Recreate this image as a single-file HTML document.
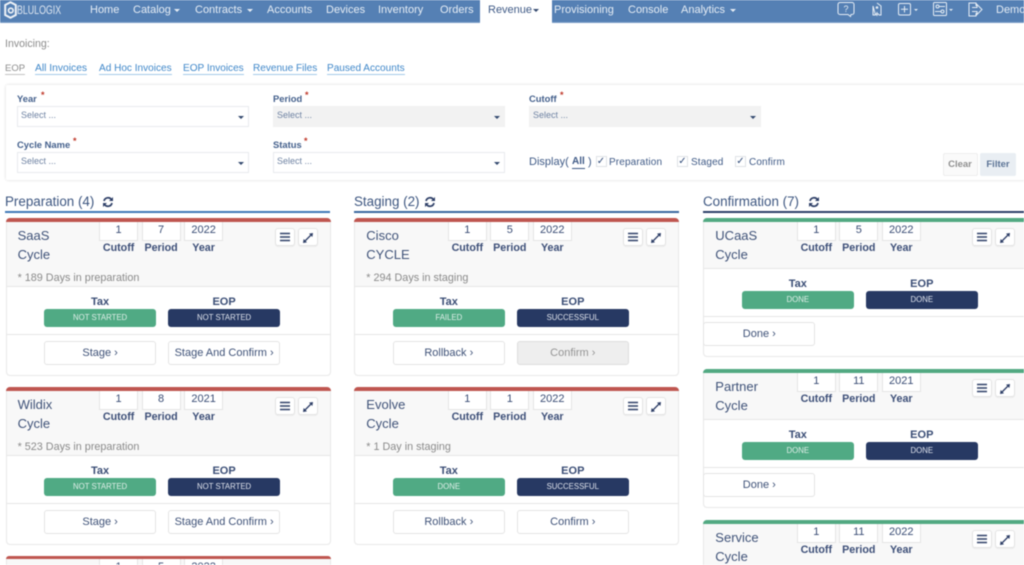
<!DOCTYPE html>
<html><head><meta charset="utf-8"><title>Invoicing</title>
<style>
*{box-sizing:border-box}
html,body{margin:0;padding:0;width:1024px;height:565px;overflow:hidden;background:#fff}
#r{position:absolute;left:0;top:0;width:1024px;height:565px;overflow:hidden;font-family:"Liberation Sans",sans-serif;color:#3a4d75;filter:blur(.4px)}
#r div,#r svg.a{position:absolute;white-space:nowrap}
.nav{left:0;top:0;width:1024px;height:23px;background:#5580b4;border-bottom:1px solid #7ea0c8}
.n{top:3px;height:15px;line-height:15px;font-size:11px;color:#e6edf5}
.c{top:9px;width:0;height:0;border-left:3.500px solid transparent;border-right:3.500px solid transparent;border-top:3.500px solid #e6edf5}
.lnk{top:62px;font-size:10.050px;line-height:13px;height:13px;color:#3f87c9;border-bottom:1px solid #a5cbe9}
.panel{left:6px;top:84.500px;width:1030px;height:95px;background:#fff;box-shadow:0 0 3px rgba(0,0,0,.15);border-radius:2px}
.lb{font-size:9.400px;font-weight:bold;color:#44608c;line-height:12px}
.st{color:#c0392b;font-size:9px;line-height:10px;font-weight:bold}
.sel{width:232px;height:21px;background:#fff;border:1px solid #e8eaee;font-size:9px;line-height:13px;color:#6f83a3;padding:2px 3px}
.sel.d{background:#f2f2f2;border-color:#f0f0f0}
.sel i{position:absolute;right:4px;top:9px;width:0;height:0;border-left:3px solid transparent;border-right:3px solid transparent;border-top:3px solid #33496f}
.cb{top:156px;width:11px;height:11px;border:1px solid #dfe2e6;background:#fff;font-size:10px;line-height:9px;text-align:center;color:#2f4a78}
.cl{top:155.500px;font-size:10px;line-height:13px;color:#3f5a86;letter-spacing:.13px}
.sec{font-size:13.400px;line-height:16px;top:194px;color:#3d5680}
.ul{top:211px;height:2px}
.card{width:325px;background:#fff;border:1px solid #e8e8e8;border-radius:4px}
.bar{left:-1px;top:-1px;right:-1px;height:3.400px;border-radius:4px 4px 0 0}
.red{background:#bf5650}.grn{background:#52a982}
.head{left:0;top:0;right:0;background:#f8f8f8;border-bottom:1px solid #e6e6e6;height:68px}
.s .head{height:50px}
.t{left:11px;top:6.500px;font-size:13px;line-height:19px;color:#3f5278}
.box{top:2.400px;width:39px;height:19px;border:1px solid #e4e4e4;border-top:0;background:#fff;font-size:11px;line-height:17px;text-align:center;color:#3a4d75}
.bl{top:22px;width:39px;font-size:10.700px;font-weight:bold;line-height:14px;text-align:center;color:#3d4f78}
.x1{left:92.500px}.x2{left:135px}.x3{left:177.500px}
.ib{top:8.500px;width:20px;height:18px;border:1px solid #e4e4e4;border-radius:3px;background:#fff;box-shadow:0 1px 1px rgba(0,0,0,.05)}
.i1{left:268px}.i2{left:291px}
.ib svg{left:3px;top:3px}
.note{left:11px;top:52px;font-size:10.800px;line-height:14px;color:#8a8a8a}
.tl{top:76px;width:112px;text-align:center;font-size:11px;font-weight:bold;line-height:14px;color:#3a4d75}
.s .tl{top:58px}
.bd{top:90px;width:112px;height:17.500px;border-radius:3px;text-align:center;font-size:7.800px;line-height:18.500px;color:#dfeee8}
.s .bd{top:72px}
.l1{left:37.500px}.l2{left:161.500px}
.g{background:#50aa84}.b{background:#273963;color:#dfe3ec}
.hr{left:0;right:0;height:1px;background:#e6e6e6;top:114.500px}
.s .hr{top:96.500px}
.btn{top:121.500px;width:112px;height:24px;border:1px solid #e4e4e4;border-radius:3px;background:#fff;text-align:center;font-size:11px;line-height:22px;color:#3f5278}
.s .btn{top:103px;left:-1px}
.btn.dis{background:#eee;color:#949494;border-color:#ddd}
</style></head><body>
<svg width="0" height="0" style="position:absolute"><symbol id="ham" viewBox="0 0 12 10"><path d="M1 1.500h10M1 5h10M1 8.500h10" stroke="#2f4068" stroke-width="1.400" fill="none"/></symbol><symbol id="exp" viewBox="0 0 12 12"><path d="M11 1L7 1.600 10.400 5zM1 11l4-.6L1.600 7z" fill="#2f4068"/><path d="M9 3L3 9" stroke="#2f4068" stroke-width="1.300"/></symbol><symbol id="ref" viewBox="0 0 12 12"><path d="M2 5a4.200 4.200 0 0 1 7.500-1.500M10 7a4.200 4.200 0 0 1-7.500 1.500" stroke="#2f4068" stroke-width="1.700" fill="none"/><path d="M11 1v4H7zM1 11V7h4z" fill="#2f4068"/></symbol></svg>
<div id="r">
<div class="nav"></div>
<svg class="a" style="left:4px;top:1px" width="13" height="18" viewBox="0 0 13 18"><path d="M6.500 1.200L11.800 4v10l-5.300 2.800L1.200 14V4z" fill="none" stroke="#eef2f7" stroke-width="2"/><circle cx="6.800" cy="9.500" r="2.300" fill="none" stroke="#eef2f7" stroke-width="1.600"/></svg>
<div class="n" style="left:17px;font-size:12px;transform:scaleX(.735);transform-origin:0 0;color:#dfe7f1">BLULOGIX</div>
<div class="n" style="left:90px">Home</div>
<div class="n" style="left:133px">Catalog</div><div class="c" style="left:173.500px"></div>
<div class="n" style="left:195px">Contracts</div><div class="c" style="left:247px"></div>
<div class="n" style="left:267px">Accounts</div>
<div class="n" style="left:326px">Devices</div>
<div class="n" style="left:378px">Inventory</div>
<div class="n" style="left:440px">Orders</div>
<div style="left:480px;top:0;width:72px;height:23px;background:#fff"></div>
<div class="n" style="left:488px;color:#3f5a86">Revenue</div><div class="c" style="left:533px;border-top-color:#33496f"></div>
<div class="n" style="left:554px">Provisioning</div>
<div class="n" style="left:628px">Console</div>
<div class="n" style="left:681px">Analytics</div><div class="c" style="left:730px"></div>
<svg class="a" style="left:837px;top:1px" width="18" height="17" viewBox="0 0 18 17"><path d="M3 1.500h12a2 2 0 0 1 2 2v8a2 2 0 0 1-2 2h-1l-.500 2-2.500-2H3a2 2 0 0 1-2-2v-8a2 2 0 0 1 2-2z" fill="none" stroke="#e6edf5"/><text x="9" y="11" font-size="9" text-anchor="middle" fill="#e6edf5" font-family="Liberation Sans">?</text></svg>
<svg class="a" style="left:870px;top:2px" width="14" height="15" viewBox="0 0 14 15"><path d="M7 1l4 3v9H8.500M5.500 13H3V4z" fill="none" stroke="#e6edf5"/><circle cx="7" cy="5.500" r="1.300" fill="#e6edf5"/><path d="M7 10v4M5 12h4" stroke="#e6edf5"/></svg>
<svg class="a" style="left:898px;top:3px" width="14" height="13" viewBox="0 0 14 13"><rect x=".5" y=".5" width="12" height="11.500" rx="1.500" fill="none" stroke="#e6edf5"/><path d="M6.500 3v6.500M3 6.300h7" stroke="#e6edf5"/></svg><div class="c" style="left:914px;top:9px;border-left-width:2.500px;border-right-width:2.500px;border-top-width:2.500px"></div>
<svg class="a" style="left:933px;top:2px" width="15" height="15" viewBox="0 0 15 15"><rect x=".5" y=".5" width="13" height="13" rx="1" fill="none" stroke="#e6edf5"/><circle cx="4.500" cy="4.500" r="1.500" fill="none" stroke="#e6edf5"/><path d="M6.500 4.500H12M2 9.500h5.500" stroke="#e6edf5"/><circle cx="9.500" cy="9.500" r="1.500" fill="none" stroke="#e6edf5"/></svg><div class="c" style="left:949px;top:9px;border-left-width:2.500px;border-right-width:2.500px;border-top-width:2.500px"></div>
<svg class="a" style="left:968px;top:2px" width="15" height="15" viewBox="0 0 15 15"><path d="M8 4V1H1v13h7v-3M4 5.500h5V2.500l5 5-5 5v-3H4" fill="none" stroke="#e6edf5"/></svg>
<div class="n" style="left:996px">Demo</div>

<div style="left:5px;top:37.500px;font-size:10.600px;line-height:13px;color:#8c8c8c">Invoicing:</div>
<div class="lnk" style="left:5px;color:#8c8c8c;border-color:#c4c4c4;font-size:9.500px">EOP</div>
<div class="lnk" style="left:35px;font-size:10.300px">All Invoices</div>
<div class="lnk" style="left:99px">Ad Hoc Invoices</div>
<div class="lnk" style="left:183px">EOP Invoices</div>
<div class="lnk" style="left:253px">Revenue Files</div>
<div class="lnk" style="left:327px">Paused Accounts</div>

<div class="panel"></div>
<div class="lb" style="left:17px;top:93px">Year</div><div class="st" style="left:41px;top:90px">*</div>
<div class="sel" style="left:17px;top:106px">Select ...<i></i></div>
<div class="lb" style="left:273px;top:93px">Period</div><div class="st" style="left:305px;top:90px">*</div>
<div class="sel d" style="left:273px;top:106px">Select ...<i></i></div>
<div class="lb" style="left:529px;top:93px">Cutoff</div><div class="st" style="left:560px;top:90px">*</div>
<div class="sel d" style="left:529px;top:106px">Select ...<i></i></div>
<div class="lb" style="left:17px;top:139px">Cycle Name</div><div class="st" style="left:73px;top:136px">*</div>
<div class="sel" style="left:17px;top:152px">Select ...<i></i></div>
<div class="lb" style="left:273px;top:139px">Status</div><div class="st" style="left:304px;top:136px">*</div>
<div class="sel" style="left:273px;top:152px">Select ...<i></i></div>
<div style="left:529px;top:154.500px;font-size:11px;line-height:14px;color:#3f5a86">Display(</div>
<div style="left:572px;top:155px;font-size:10px;font-weight:bold;line-height:13px;color:#3f5a86;border-bottom:1px solid #3f5a86">All</div>
<div style="left:588px;top:154.500px;font-size:11px;line-height:14px;color:#3f5a86">)</div>
<div class="cb" style="left:595.500px">✓</div><div class="cl" style="left:609px">Preparation</div>
<div class="cb" style="left:677px">✓</div><div class="cl" style="left:691px">Staged</div>
<div class="cb" style="left:735px">✓</div><div class="cl" style="left:749px">Confirm</div>
<div style="left:942.500px;top:153px;width:35px;height:23px;border:1px solid #eee;background:#fafafa;border-radius:2px;text-align:center;font-size:9.500px;font-weight:bold;line-height:21px;color:#8f8f8f">Clear</div>
<div style="left:980px;top:153px;width:36px;height:23px;background:#e9eef3;border-radius:2px;text-align:center;font-size:9.500px;font-weight:bold;line-height:23px;color:#5c7496">Filter</div>

<div class="sec" style="left:5px">Preparation (4)</div><svg class="a" style="left:102px;top:195.500px" width="12" height="12"><use href="#ref"/></svg>
<div class="ul" style="left:5px;width:325px;background:#3f78b7"></div>
<div class="sec" style="left:354px">Staging (2)</div><svg class="a" style="left:424px;top:195.500px" width="12" height="12"><use href="#ref"/></svg>
<div class="ul" style="left:354px;width:325px;background:#3a689f"></div>
<div class="sec" style="left:703px">Confirmation (7)</div><svg class="a" style="left:808px;top:195.500px" width="12" height="12"><use href="#ref"/></svg>
<div class="ul" style="left:703px;width:330px;background:#2d3f69"></div>

<!-- Column 1 -->
<div class="card" style="left:5.600px;top:218.300px;height:158px">
<div class="head"></div><div class="bar red"></div>
<div class="t">SaaS<br>Cycle</div>
<div class="box x1">1</div><div class="box x2">7</div><div class="box x3">2022</div>
<div class="bl x1">Cutoff</div><div class="bl x2">Period</div><div class="bl x3">Year</div>
<div class="ib i1"><svg class="a" width="12" height="10"><use href="#ham"/></svg></div>
<div class="ib i2"><svg class="a" width="12" height="12"><use href="#exp"/></svg></div>
<div class="note">* 189 Days in preparation</div>
<div class="tl l1">Tax</div><div class="tl l2">EOP</div>
<div class="bd g l1">NOT STARTED</div><div class="bd b l2">NOT STARTED</div>
<div class="hr"></div>
<div class="btn l1">Stage ›</div><div class="btn l2">Stage And Confirm ›</div>
</div>
<div class="card" style="left:5.600px;top:387.300px;height:158px">
<div class="head"></div><div class="bar red"></div>
<div class="t">Wildix<br>Cycle</div>
<div class="box x1">1</div><div class="box x2">8</div><div class="box x3">2021</div>
<div class="bl x1">Cutoff</div><div class="bl x2">Period</div><div class="bl x3">Year</div>
<div class="ib i1"><svg class="a" width="12" height="10"><use href="#ham"/></svg></div>
<div class="ib i2"><svg class="a" width="12" height="12"><use href="#exp"/></svg></div>
<div class="note">* 523 Days in preparation</div>
<div class="tl l1">Tax</div><div class="tl l2">EOP</div>
<div class="bd g l1">NOT STARTED</div><div class="bd b l2">NOT STARTED</div>
<div class="hr"></div>
<div class="btn l1">Stage ›</div><div class="btn l2">Stage And Confirm ›</div>
</div>
<div class="card" style="left:5.600px;top:556px;height:158px">
<div class="head"></div><div class="bar red"></div>
<div class="box x1">1</div><div class="box x2">5</div><div class="box x3">2022</div>
</div>

<!-- Column 2 -->
<div class="card" style="left:354.300px;top:218.300px;height:158px">
<div class="head"></div><div class="bar red"></div>
<div class="t">Cisco<br>CYCLE</div>
<div class="box x1">1</div><div class="box x2">5</div><div class="box x3">2022</div>
<div class="bl x1">Cutoff</div><div class="bl x2">Period</div><div class="bl x3">Year</div>
<div class="ib i1"><svg class="a" width="12" height="10"><use href="#ham"/></svg></div>
<div class="ib i2"><svg class="a" width="12" height="12"><use href="#exp"/></svg></div>
<div class="note">* 294 Days in staging</div>
<div class="tl l1">Tax</div><div class="tl l2">EOP</div>
<div class="bd g l1">FAILED</div><div class="bd b l2">SUCCESSFUL</div>
<div class="hr"></div>
<div class="btn l1">Rollback ›</div><div class="btn dis l2">Confirm ›</div>
</div>
<div class="card" style="left:354.300px;top:387.300px;height:158px">
<div class="head"></div><div class="bar red"></div>
<div class="t">Evolve<br>Cycle</div>
<div class="box x1">1</div><div class="box x2">1</div><div class="box x3">2022</div>
<div class="bl x1">Cutoff</div><div class="bl x2">Period</div><div class="bl x3">Year</div>
<div class="ib i1"><svg class="a" width="12" height="10"><use href="#ham"/></svg></div>
<div class="ib i2"><svg class="a" width="12" height="12"><use href="#exp"/></svg></div>
<div class="note">* 1 Day in staging</div>
<div class="tl l1">Tax</div><div class="tl l2">EOP</div>
<div class="bd g l1">DONE</div><div class="bd b l2">SUCCESSFUL</div>
<div class="hr"></div>
<div class="btn l1">Rollback ›</div><div class="btn l2">Confirm ›</div>
</div>

<!-- Column 3 -->
<div class="card s" style="left:703.300px;top:218.300px;height:139px;width:335px">
<div class="head"></div><div class="bar grn"></div>
<div class="t">UCaaS<br>Cycle</div>
<div class="box x1">1</div><div class="box x2">5</div><div class="box x3">2022</div>
<div class="bl x1">Cutoff</div><div class="bl x2">Period</div><div class="bl x3">Year</div>
<div class="ib i1"><svg class="a" width="12" height="10"><use href="#ham"/></svg></div>
<div class="ib i2"><svg class="a" width="12" height="12"><use href="#exp"/></svg></div>
<div class="tl l1">Tax</div><div class="tl l2">EOP</div>
<div class="bd g l1">DONE</div><div class="bd b l2">DONE</div>
<div class="hr"></div>
<div class="btn">Done ›</div>
</div>
<div class="card s" style="left:703.300px;top:369.300px;height:139px;width:335px">
<div class="head"></div><div class="bar grn"></div>
<div class="t">Partner<br>Cycle</div>
<div class="box x1">1</div><div class="box x2">11</div><div class="box x3">2021</div>
<div class="bl x1">Cutoff</div><div class="bl x2">Period</div><div class="bl x3">Year</div>
<div class="ib i1"><svg class="a" width="12" height="10"><use href="#ham"/></svg></div>
<div class="ib i2"><svg class="a" width="12" height="12"><use href="#exp"/></svg></div>
<div class="tl l1">Tax</div><div class="tl l2">EOP</div>
<div class="bd g l1">DONE</div><div class="bd b l2">DONE</div>
<div class="hr"></div>
<div class="btn">Done ›</div>
</div>
<div class="card s" style="left:703.300px;top:520.300px;height:139px;width:335px">
<div class="head"></div><div class="bar grn"></div>
<div class="t">Service<br>Cycle</div>
<div class="box x1">1</div><div class="box x2">11</div><div class="box x3">2022</div>
<div class="bl x1">Cutoff</div><div class="bl x2">Period</div><div class="bl x3">Year</div>
<div class="ib i1"><svg class="a" width="12" height="10"><use href="#ham"/></svg></div>
<div class="ib i2"><svg class="a" width="12" height="12"><use href="#exp"/></svg></div>
</div>
</div>
</body></html>
